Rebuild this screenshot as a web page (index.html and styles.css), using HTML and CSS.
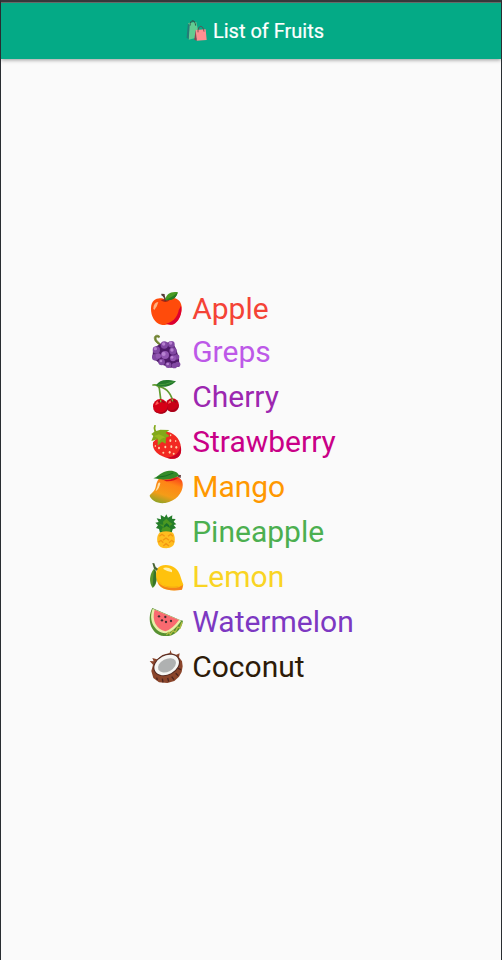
FILE: index.html
```html
<!DOCTYPE html>
<html lang="en">
<head>
<meta charset="utf-8">
<title>List of Fruits</title>
<link rel="stylesheet" href="styles.css">
</head>
<body>
<div class="window">
<header class="bar">
<svg class="bags" viewBox="0 0 66 72" aria-hidden="true">
<path d="M12 25C13 3 29 0 31 20" fill="none" stroke="#355f55" stroke-width="3"/>
<path d="M6 12L31 9L40 54L8 62Z" fill="#62cc91"/><path d="M6 12L2 55L8 62L11 20Z" fill="#267b77"/>
<path d="M12 20C12 0 27 0 29 20" fill="none" stroke="#31594e" stroke-width="3"/>
<path d="M29 33L59 31L62 63L32 65Z" fill="#ff8f91"/><path d="M29 33L25 62L32 65Z" fill="#913f50"/>
<path d="M36 40C34 18 52 15 54 38" fill="none" stroke="#713d48" stroke-width="2.5"/>
</svg>
<h1 class="title">List of Fruits</h1>
</header>
<main class="content">
<ul class="fruits">
<li class="fruit apple"><svg class="icon" viewBox="0 0 132 135" aria-hidden="true">
<path d="M76 44C91 33 124 37 125 67C126 94 107 121 91 119C80 116 76 122 64 119C45 116 32 93 33 70C34 38 61 36 76 44Z" fill="#ff4b0b"/>
<path d="M123 62C130 92 108 123 90 119L78 116C105 111 114 88 116 76Z" fill="#dc0030"/>
<path d="M62 46Q76 39 89 46Q77 56 62 46Z" fill="#a62616"/>
<path d="M64 26L74 27Q73 32 80 46L74 49Q73 36 64 31Z" fill="#563c36"/>
<path d="M76 45C78 27 93 18 114 22C109 38 94 48 76 45Z" fill="#499b22"/><path d="M78 43Q94 39 112 23C111 38 95 50 78 43Z" fill="#267b20"/>
<path d="M40 71Q41 52 55 51Q53 62 43 75Z" fill="#ffb482"/>
</svg><span class="name">Apple</span></li>
<li class="fruit grapes"><svg class="icon" viewBox="0 0 132 135" aria-hidden="true">
<path d="M64 50C57 42 44 38 43 26C41 15 54 12 60 20L56 23C47 17 46 28 53 34L66 46Z" fill="#708331" stroke="#708331" stroke-width="2"/>
<path d="M40 54L67 38L98 37L108 56L117 84L118 110L92 113L60 102L37 82Z" fill="#4e1a69"/>
<g fill="#8148a2"><circle cx="73" cy="45" r="11"/><circle cx="94" cy="43" r="10"/><circle cx="49" cy="60" r="11"/><circle cx="99" cy="63" r="11"/><circle cx="46" cy="82" r="10"/><circle cx="110" cy="81" r="8"/><circle cx="65" cy="96" r="10"/><circle cx="85" cy="105" r="9"/><circle cx="103" cy="107" r="8"/><circle cx="113" cy="103" r="8"/></g>
<g fill="#9256b2"><circle cx="75" cy="75" r="12"/><circle cx="99" cy="85" r="9"/><circle cx="55" cy="78" r="8"/></g>
<g fill="#b782d1"><circle cx="71" cy="42" r="5"/><circle cx="92" cy="39" r="5"/><circle cx="46" cy="56" r="5"/><circle cx="96" cy="60" r="5"/><circle cx="71" cy="72" r="6"/><circle cx="96" cy="82" r="4"/><circle cx="63" cy="93" r="4"/><circle cx="83" cy="102" r="4"/></g>
</svg><span class="name">Greps</span></li>
<li class="fruit cherry"><svg class="icon" viewBox="0 0 132 135" aria-hidden="true">
<path d="M39 30Q54 27 58 40L63 79M51 32C77 39 89 48 98 76" fill="none" stroke="#629b30" stroke-width="5" stroke-linecap="round"/>
<path d="M48 31C59 14 77 12 108 19C96 31 77 42 48 31Z" fill="#237a2b"/><path d="M53 30Q76 30 101 20" fill="none" stroke="#459b3b" stroke-width="3"/>
<circle cx="97" cy="90" r="20" fill="#c90016"/><circle cx="61" cy="94" r="22" fill="#d60016"/>
<path d="M39 98Q46 117 69 111Q82 104 83 92C87 112 69 119 56 115Q42 113 39 98M79 103Q107 112 117 88Q114 117 91 110Z" fill="#a90019"/>
<path d="M52 82Q62 75 74 83M89 79Q99 74 109 82" fill="none" stroke="#9c0b17" stroke-width="5"/>
<path d="M46 91Q47 80 54 79L56 86ZM84 86Q85 78 92 76L93 83Z" fill="#ff5957"/><path d="M62 75V82M96 71L98 79" stroke="#8aaf42" stroke-width="4"/>
</svg><span class="name">Cherry</span></li>
<li class="fruit strawberry"><svg class="icon" viewBox="0 0 132 135" aria-hidden="true">
<path d="M39 67C35 91 56 110 91 116C111 119 126 107 123 83C121 51 93 32 70 36Z" fill="#f22922"/><path d="M91 116C119 119 127 101 122 77C118 98 104 111 80 113Z" fill="#c90025"/>
<path d="M43 15Q38 24 43 35L34 42L40 48L34 63L53 58L53 77L66 65L77 71L78 53L89 48L77 39L88 30L61 29L49 33Q44 27 48 16Z" fill="#83a91a"/><path d="M42 48L57 43L76 52L63 57L56 68L53 54Z" fill="#9aba20"/>
<g fill="#ffd1a6"><ellipse cx="91" cy="62" rx="3" ry="4"/><ellipse cx="107" cy="63" rx="2" ry="3"/><ellipse cx="76" cy="81" rx="3" ry="4"/><ellipse cx="94" cy="80" rx="3" ry="4"/><ellipse cx="109" cy="82" rx="3" ry="4"/><ellipse cx="57" cy="84" rx="3" ry="4"/><ellipse cx="70" cy="98" rx="3" ry="3"/><ellipse cx="89" cy="97" rx="3" ry="4"/><ellipse cx="101" cy="101" rx="3" ry="3"/><ellipse cx="46" cy="78" rx="2" ry="3"/><ellipse cx="92" cy="46" rx="2" ry="3"/></g>
</svg><span class="name">Strawberry</span></li>
<li class="fruit mango"><svg class="icon" viewBox="0 0 132 135" aria-hidden="true">
<defs><linearGradient id="mg" x1=".7" y1="0" x2=".3" y2="1"><stop stop-color="#f83b1b"/><stop offset=".3" stop-color="#ff8516"/><stop offset=".7" stop-color="#f49c18"/><stop offset="1" stop-color="#91a326"/></linearGradient></defs>
<path d="M64 36C87 25 120 31 127 50C134 77 111 108 76 114C51 117 35 106 29 93C29 86 43 84 47 66C50 52 53 42 64 36Z" fill="url(#mg)"/>
<path d="M63 41Q83 50 101 40L117 37Q104 50 79 49Z" fill="#dd1519"/><path d="M112 29L123 30L122 39L113 36Z" fill="#684345"/>
<path d="M40 40C57 33 63 20 87 17C106 16 115 24 117 32C93 45 66 46 40 40Z" fill="#348b29"/><path d="M51 37Q79 35 100 24" fill="none" stroke="#176d23" stroke-width="3"/>
<path d="M47 77Q53 66 54 56Q58 50 61 54Q59 69 48 78Z" fill="#ffe0a6"/>
</svg><span class="name">Mango</span></li>
<li class="fruit pineapple"><svg class="icon" viewBox="0 0 132 135" aria-hidden="true">
<path d="M62 15L74 22L79 13L84 23L97 16L96 26L107 27L101 35L109 43L101 45L108 54L98 58L95 68H60L57 57L48 54L54 46L46 38L56 36L50 25L63 28Z" fill="#247d29"/>
<path d="M69 35L79 26L89 36L98 42L89 48L92 63H63L69 51L57 43L70 44Z" fill="#4b9821"/><path d="M70 54L73 45L80 39L87 45L90 54L80 48Z" fill="#19712b"/>
<path d="M58 68Q78 60 99 68Q106 79 104 96Q101 114 79 115Q56 115 52 95Q49 80 58 68Z" fill="#ffbd1f"/>
<path d="M58 79L66 73L74 79M84 79L92 73L99 79M69 91L78 84L87 91M55 97L63 91L70 98M87 98L95 91L102 97M70 108L78 101L87 108" fill="none" stroke="#f39613" stroke-width="4"/>
</svg><span class="name">Pineapple</span></li>
<li class="fruit lemon"><svg class="icon" viewBox="0 0 132 135" aria-hidden="true">
<path d="M43 40C29 56 25 82 38 99C52 91 54 60 43 40Z" fill="#5b962b"/><path d="M42 45Q39 70 38 96C52 86 52 63 46 45Z" fill="#36732b"/>
<path d="M51 42C62 25 91 28 105 39C120 50 122 68 127 81L130 89L126 103C109 107 87 108 69 100C50 91 44 62 51 42Z" fill="#ffc20d"/>
<path d="M50 69C57 101 91 99 116 97L129 90L126 104C100 109 70 107 56 88Z" fill="#f5831a"/><path d="M50 68C58 95 89 95 117 94L109 99Q67 101 50 68Z" fill="#f7ad12"/>
<path d="M37 24L43 25L47 36L54 41L50 47L42 41Z" fill="#496535"/><path d="M70 39Q84 35 96 45L96 52Q80 49 71 43Z" fill="#fff1b0"/>
</svg><span class="name">Lemon</span></li>
<li class="fruit watermelon"><svg class="icon" viewBox="0 0 132 135" aria-hidden="true">
<path d="M37 24C18 60 35 105 71 108C99 111 124 93 129 62L120 60Z" fill="#579131"/><path d="M38 26C24 61 43 96 76 100Q99 98 124 62Z" fill="#e8eda7"/><path d="M44 29C34 62 50 88 76 94Q97 88 117 60Z" fill="#f96a70"/>
<path d="M79 104L87 97L91 103L99 92L106 97L113 81L120 84L126 67" fill="none" stroke="#b3bd43" stroke-width="4"/>
<g fill="#412c31"><circle cx="57" cy="49" r="3.5"/><circle cx="76" cy="51" r="3.5"/><circle cx="66" cy="61" r="3.5"/><circle cx="78" cy="66" r="3.5"/><circle cx="93" cy="63" r="3.5"/></g>
</svg><span class="name">Watermelon</span></li>
<li class="fruit coconut"><svg class="icon" viewBox="0 0 132 135" aria-hidden="true">
<path d="M39 59L29 48L41 49L37 39L51 43L67 30L89 24L91 15L95 25L109 29L119 25L117 37L126 49L128 64L125 81L117 95L103 108L82 114L57 112L40 99L34 78Z" fill="#8a452b"/>
<path d="M52 105L50 98M69 112L67 101M86 110L83 99M102 104L95 95M115 92L107 85M123 74L114 70" stroke="#4c241e" stroke-width="4"/>
<ellipse cx="80" cy="60" rx="42" ry="31" transform="rotate(-28 80 60)" fill="#522a22"/><ellipse cx="80" cy="60" rx="39" ry="28" transform="rotate(-28 80 60)" fill="#f5f5f3"/><ellipse cx="81" cy="61" rx="29" ry="19" transform="rotate(-28 81 61)" fill="#afb1b1"/>
</svg><span class="name">Coconut</span></li>
</ul>
</main>
</div>
</body>
</html>
```
FILE: styles.css
```css
* { box-sizing: border-box; }
body { margin: 0; background: #fafafa; font-family: Roboto, sans-serif; }
.window { height: 960px; border: 1px solid #292d31; border-top: 2px solid #36383b; border-bottom: 0; display: flex; flex-direction: column; overflow: hidden; }
.bar { height: 57px; flex: none; padding-left: 8px; border-top: 1px solid #666a69; background: #04aa86; box-shadow: 0 1px 4px #0006; display: flex; justify-content: center; align-items: center; gap: 5px; }
.bags { width: 22px; height: 24px; }
.title { margin: 0; color: #fff; font-size: 20px; line-height: 24px; font-weight: 400; -webkit-text-stroke: .2px #fff; }
.content { padding: 226px 0 0 139px; }
.fruits { margin: 0; padding: 0; list-style: none; }
.fruit { height: 45px; display: flex; align-items: center; gap: 8.2px; font-size: 30px; line-height: 35px; }
.icon { width: 44px; height: 45px; flex: none; }
.name { margin-top: -2px; }
.apple .name { margin-top: 2px; }
.apple { color: #f44336; }
.grapes { color: #bd59e8; }
.cherry { color: #9c27b0; }
.strawberry { color: #c90087; }
.mango { color: #ff9800; }
.pineapple { color: #4caf50; }
.lemon { color: #f9d423; }
.watermelon { color: #7d38c2; }
.coconut { color: #2d1b08; }
```
